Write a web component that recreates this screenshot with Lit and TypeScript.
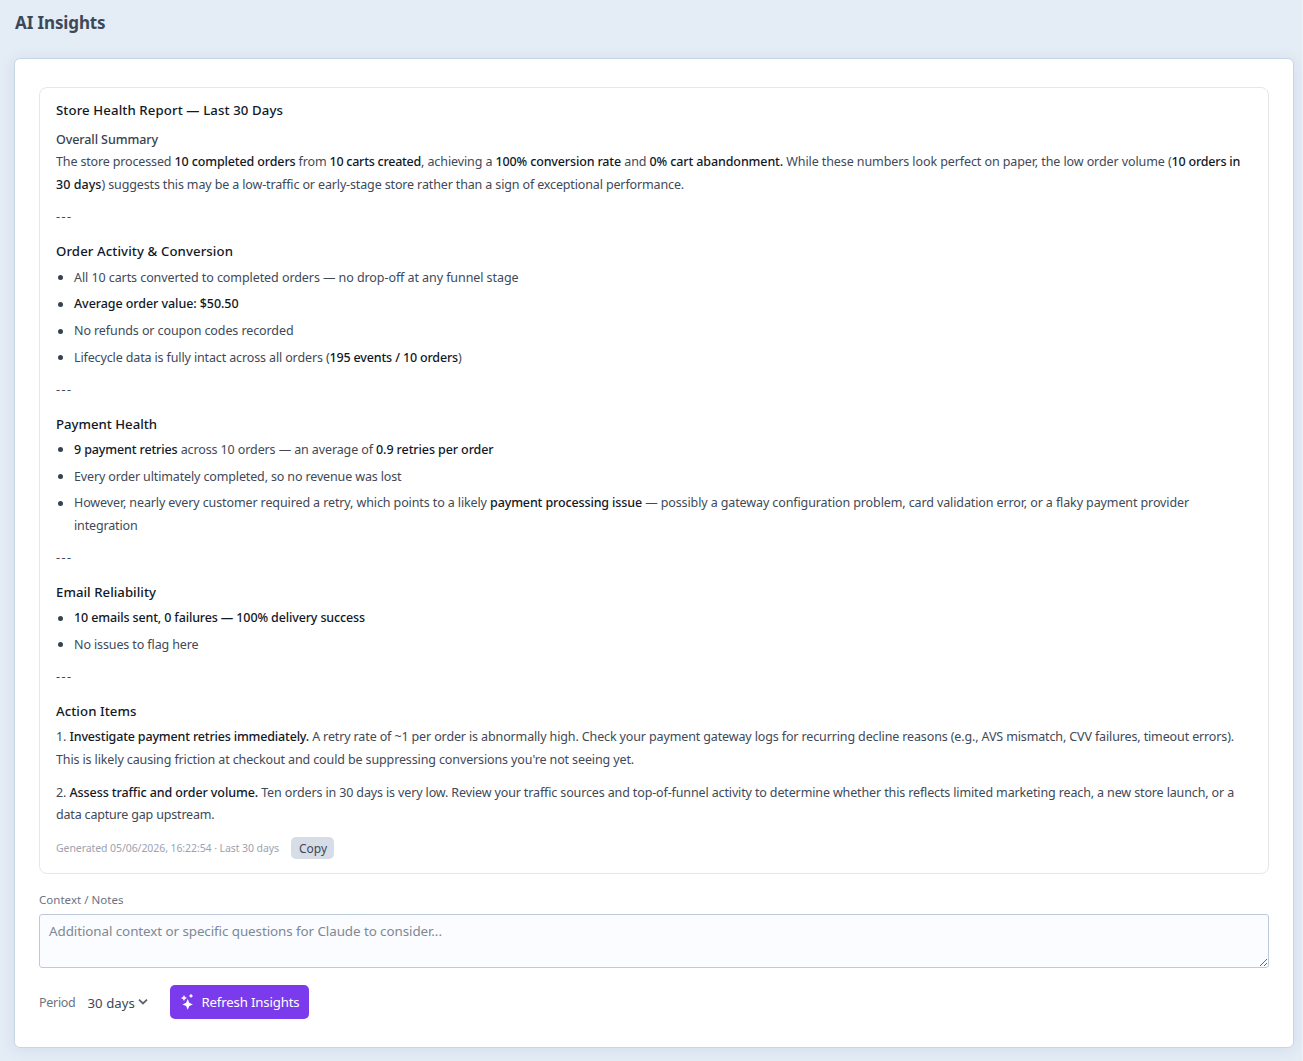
import { LitElement, html, css, nothing } from "lit";
import { customElement, property } from "lit/decorators.js";
import { styleMap } from "lit/directives/style-map.js";

const FAMILY = '"Noto Sans", "Open Sans", sans-serif';

/** A run of text: content, measured width in pixels, emphasised or not. */
type Run = [text: string, width: number, strong?: boolean];
type Line = Run[];
type Block =
  | { kind: "heading"; line: Run }
  | { kind: "para"; lines: Line[] }
  | { kind: "list"; items: Line[][] };

const rule: Block = { kind: "para", lines: [[["---", 16.5]]] };

const REPORT: Block[] = [
  {
    kind: "para",
    lines: [
      [
        ["The store processed ", 118.5],
        ["10 completed orders", 121, true],
        [" from ", 34],
        ["10 carts created", 91.5, true],
        [", achieving a ", 74.5],
        ["100% conversion rate", 125.5, true],
        [" and ", 28.5],
        ["0% cart abandonment.", 133.5, true],
        [" While these numbers look perfect on paper, the low order volume (", 388.5],
        ["10 orders in", 68.5, true],
      ],
      [
        ["30 days", 45.5, true],
        [") suggests this may be a low-traffic or early-stage store rather than a sign of exceptional performance.", 582.5],
      ],
    ],
  },
  rule,
  { kind: "heading", line: ["Order Activity & Conversion", 177] },
  {
    kind: "list",
    items: [
      [[["All 10 carts converted to completed orders — no drop-off at any funnel stage", 444.5]]],
      [[["Average order value: $50.50", 164.5, true]]],
      [[["No refunds or coupon codes recorded", 219.5]]],
      [[
        ["Lifecycle data is fully intact across all orders (", 255.5],
        ["195 events / 10 orders", 128.5, true],
        [")", 4],
      ]],
    ],
  },
  rule,
  { kind: "heading", line: ["Payment Health", 101] },
  {
    kind: "list",
    items: [
      [[
        ["9 payment retries", 103.5, true],
        [" across 10 orders — an average of ", 198.5],
        ["0.9 retries per order", 117.5, true],
      ]],
      [[["Every order ultimately completed, so no revenue was lost", 327.5]]],
      [
        [
          ["However, nearly every customer required a retry, which points to a likely ", 416],
          ["payment processing issue", 152, true],
          [" — possibly a gateway configuration problem, card validation error, or a flaky payment provider", 547],
        ],
        [["integration", 63.5]],
      ],
    ],
  },
  rule,
  { kind: "heading", line: ["Email Reliability", 100] },
  {
    kind: "list",
    items: [
      [[["10 emails sent, 0 failures — 100% delivery success", 291, true]]],
      [[["No issues to flag here", 124.5]]],
    ],
  },
  rule,
  { kind: "heading", line: ["Action Items", 80.5] },
  {
    kind: "para",
    lines: [
      [
        ["1. ", 13.5],
        ["Investigate payment retries immediately.", 239.5, true],
        [" A retry rate of ~1 per order is abnormally high. Check your payment gateway logs for recurring decline reasons (e.g., AVS mismatch, CVV failures, timeout errors).", 925],
      ],
      [["This is likely causing friction at checkout and could be suppressing conversions you're not seeing yet.", 578]],
    ],
  },
  {
    kind: "para",
    lines: [
      [
        ["2. ", 13.5],
        ["Assess traffic and order volume.", 188.5, true],
        [" Ten orders in 30 days is very low. Review your traffic sources and top-of-funnel activity to determine whether this reflects limited marketing reach, a new store launch, or a", 976],
      ],
      [["data capture gap upstream.", 158.5]],
    ],
  },
];

const ctx = document.createElement("canvas").getContext("2d")!;

/** Letter spacing that makes a text fill the given width. */
function tracking(text: string, width: number, size: number, weight: number): string {
  ctx.font = `${weight} ${size}px ${FAMILY}`;
  return `${((width - ctx.measureText(text).width) / text.length).toFixed(4)}px`;
}

function fit(text: string, width: number, size: number, weight = 400, cls = "run") {
  return html`<span class=${cls} style=${styleMap({ letterSpacing: tracking(text, width, size, weight) })}>${text}</span>`;
}

@customElement("report-body")
export class ReportBody extends LitElement {
  @property({ attribute: false }) blocks: Block[] = [];

  static styles = css`
    :host { display: block; font: 400 12.5px/22.75px "Noto Sans", "Open Sans", sans-serif; color: #404958; }
    .run, .strong { white-space: pre; }
    .strong { font-weight: 500; color: #111827; }
    .line { display: block; white-space: nowrap; height: 22.75px; }
    p { margin: 0 0 10px; }
    h3 { margin: 12.4px 0 5.2px; font-size: 13.2px; line-height: 20px; font-weight: 500; color: #111827; }
    ul { list-style: none; margin: 0 0 9px; padding: 0; display: flex; flex-direction: column; gap: 4px; }
    li { display: flex; }
    .dot { flex: none; width: 5px; height: 5px; border-radius: 50%; background: #374151; margin: 8.4px 11px 0 2px; }
  `;

  private line(runs: Line) {
    return html`<span class="line">${runs.map(([t, w, s]) => fit(t, w, 12.5, s ? 500 : 400, s ? "strong" : "run"))}</span>`;
  }

  render() {
    return this.blocks.map((b) => {
      switch (b.kind) {
        case "heading":
          return html`<h3>${fit(b.line[0], b.line[1], 13.2, 500)}</h3>`;
        case "para":
          return html`<p>${b.lines.map((l) => this.line(l))}</p>`;
        case "list":
          return html`<ul>${b.items.map((i) => html`<li><span class="dot"></span><div>${i.map((l) => this.line(l))}</div></li>`)}</ul>`;
        default:
          return nothing;
      }
    });
  }
}

@customElement("app-root")
export class AppRoot extends LitElement {
  static styles = css`
    :host { display: block; }
    * { box-sizing: border-box; }
    .page {
      height: 1061px; background: #e4ecf5; border-right: 1px solid #edf1f8;
      padding: 0 8px 13px 14px; display: flex; flex-direction: column; overflow: hidden;
      font: 400 12.5px/20px "Noto Sans", "Open Sans", sans-serif; color: #374151;
    }
    .run { white-space: pre; }
    h1 { margin: 0; padding: 10px 0 0 1px; height: 58px; flex: none; font-size: 17px; line-height: 26px; font-weight: 700; color: #3c4858; }
    .card {
      flex: 1; min-height: 0; background: #fff; border: 1px solid #c8d5e4; border-radius: 6px;
      box-shadow: 0 2px 14px rgba(120, 150, 190, 0.16); padding: 28px 24px 0;
      display: flex; flex-direction: column;
    }
    .report { border: 1px solid #e5e7eb; border-radius: 8px; height: 787px; padding: 12px 16px 14px; display: flex; flex-direction: column; }
    h2 { margin: 0; font-size: 13.2px; line-height: 20px; font-weight: 500; color: #111827; }
    h4 { margin: 10px 0 0.8px; font-size: 12.5px; line-height: 20px; font-weight: 500; color: #374151; }
    .foot { margin-top: auto; display: flex; align-items: center; gap: 12px; font-size: 10.5px; color: #9ca3af; }
    .copy { border: 0; margin: 0; padding: 1px 0 0 8px; text-align: left; width: 43px; height: 22px; border-radius: 5px; background: #d7dde7; color: #3c4858; font: 400 12px/21px "Noto Sans", "Open Sans", sans-serif; }
    label { display: block; margin-top: 16px; height: 24px; font-size: 11.5px; color: #6b7280; }
    textarea {
      display: block; width: 100%; height: 54px; margin: 0; padding: 6px 9px; border: 1px solid #bccadb; border-radius: 3px;
      background: #fafcff; font: 400 13.4px/20px "Noto Sans", "Open Sans", sans-serif; letter-spacing: -0.075px; resize: vertical; overflow: hidden; outline: none;
    }
    textarea::placeholder { color: #808893; opacity: 1; }
    .bar { display: flex; align-items: center; margin-top: 17px; height: 34px; }
    .period { color: #6b7280; width: 48.5px; padding-top: 2px; }
    .select { display: flex; align-items: center; gap: 3px; width: 82.5px; font-size: 13.2px; color: #3c4858; padding-top: 1px; }
    .chev { width: 10px; height: 10px; flex: none; margin-top: -2px; }
    .refresh {
      border: 0; margin: 0; width: 139px; height: 34px; padding: 0 0 0 10px; border-radius: 5px; background: #7c3aed; color: #fff;
      font: 400 13.2px/34px "Noto Sans", "Open Sans", sans-serif; display: flex; align-items: center; gap: 5.5px;
    }
    .spark { width: 16px; height: 18px; flex: none; }
  `;

  render() {
    return html`
      <div class="page">
        <h1>${fit("AI Insights", 90.5, 17, 700)}</h1>
        <main class="card">
          <section class="report">
            <h2>${fit("Store Health Report — Last 30 Days", 227, 13.2, 500)}</h2>
            <h4>${fit("Overall Summary", 102, 12.5, 500)}</h4>
            <report-body .blocks=${REPORT}></report-body>
            <div class="foot">
              ${fit("Generated 05/06/2026, 16:22:54 · Last 30 days", 223, 10.5)}
              <button class="copy">${fit("Copy", 28, 12)}</button>
            </div>
          </section>
          <label>${fit("Context / Notes", 84.5, 11.5)}</label>
          <textarea placeholder="Additional context or specific questions for Claude to consider..."></textarea>
          <div class="bar">
            <span class="period">${fit("Period", 36.5, 12.5)}</span>
            <span class="select">
              ${fit("30 days", 47.5, 13.2)}
              <svg class="chev" viewBox="0 0 10 10"><path d="M1 2.7 5 6.5 9 2.7" fill="none" stroke="#5b6470" stroke-width="1.8" /></svg>
            </span>
            <button class="refresh">
              <svg class="spark" viewBox="0 0 16 18" fill="#fff">
                <path d="M7.7 6 9.3 9.8 12.9 11.4 9.3 13 7.7 16.8 6.1 13 2.5 11.4 6.1 9.8Z" />
                <path d="M4 1.9 5 4 7.1 5 5 6 4 8.1 3 6 0.9 5 3 4Z" />
                <path d="M11 0.8 11.9 2 13.1 2.9 11.9 3.8 11 5 10.1 3.8 8.9 2.9 10.1 2Z" />
              </svg>
              ${fit("Refresh Insights", 98, 13.2)}
            </button>
          </div>
        </main>
      </div>
    `;
  }
}
